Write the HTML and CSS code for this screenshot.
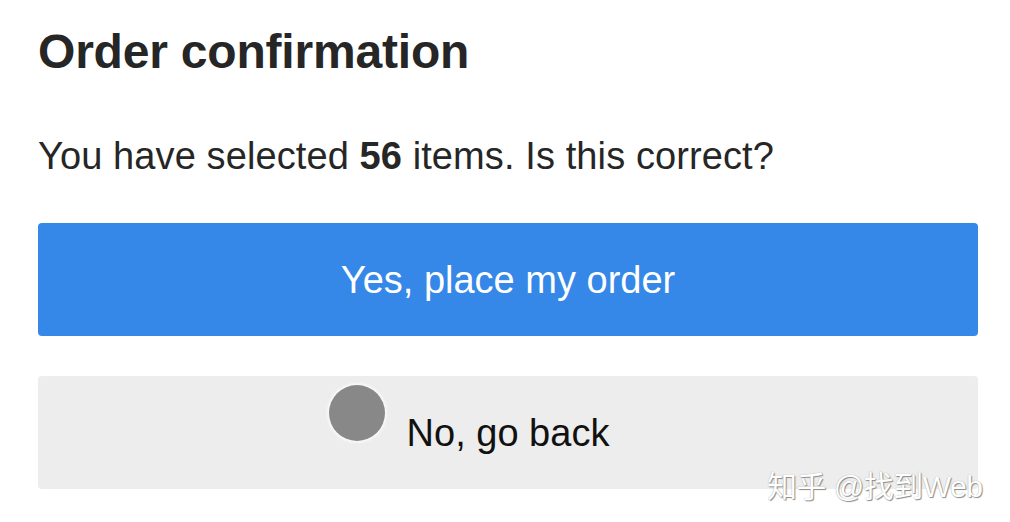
FILE: index.html
```html
<!DOCTYPE html>
<html>
<head>
<meta charset="utf-8">
<link rel="stylesheet" href="styles.css">
</head>
<body>
<main class="page">
  <h1 class="title">Order confirmation</h1>
  <p class="question">You have selected <strong>56</strong> items. Is this correct?</p>
  <button class="btn btn-primary">Yes, place my order</button>
  <button class="btn btn-secondary"><span class="btn-label">No, go back</span><span class="dot"></span></button>
  <div class="watermark">知乎 @找到Web</div>
</main>
</body>
</html>
```
FILE: styles.css
```css
html, body {
  margin: 0;
  padding: 0;
  background: #ffffff;
}
.page {
  position: relative;
  width: 1010px;
  height: 522px;
  padding: 0 32px 0 38px;
  box-sizing: border-box;
  font-family: "Liberation Sans", Arial, sans-serif;
  color: #262626;
  display: flex;
  flex-direction: column;
}
.title {
  margin: 22px 0 0 0;
  font-size: 48px;
  line-height: 60px;
  font-weight: 700;
  letter-spacing: -0.2px;
}
.question {
  margin: 52px 0 0 0;
  font-size: 38px;
  line-height: 44px;
  font-weight: 400;
  letter-spacing: 0.1px;
}
.question strong {
  font-weight: 700;
}
.btn {
  position: relative;
  width: 940px;
  height: 113px;
  border: none;
  border-radius: 4px;
  font-family: "Liberation Sans", Arial, sans-serif;
  font-size: 38px;
  line-height: 44px;
  display: flex;
  align-items: center;
  justify-content: center;
  padding: 0;
}
.btn-primary {
  margin-top: 45px;
  background: #3587e8;
  color: #ffffff;
}
.btn-secondary {
  margin-top: 40px;
  background: #ededed;
  color: #111111;
}
.btn-label {
  margin-top: 0;
}
.dot {
  position: absolute;
  left: 291px;
  top: 9px;
  width: 56px;
  height: 56px;
  border-radius: 50%;
  background: #888888;
  box-shadow: 0 0 2px 2px #f8f8f8;
}
.watermark {
  position: absolute;
  left: 767px;
  top: 462px;
  font-family: "Liberation Sans", "Noto Sans CJK SC", sans-serif;
  font-size: 30px;
  color: #ffffff;
  text-shadow: 1px 1px 1px #8a8a8a, 0 0 1px #9a9a9a;
  letter-spacing: -0.5px;
}
```
